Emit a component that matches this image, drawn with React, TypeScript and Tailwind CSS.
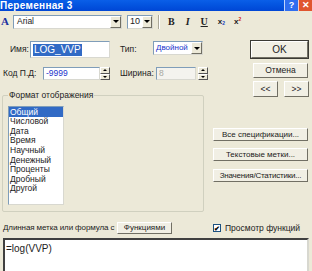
import React from 'react';

const font = "font-['Liberation_Sans',Arial,sans-serif]";

const Raised: React.FC<{ className?: string; children?: React.ReactNode; def?: boolean }> = ({ className = '', children, def }) => (
  <div className={`flex items-center justify-center whitespace-nowrap bg-[#f1efe4] border border-t-white border-l-white border-b-[#716f64] border-r-[#716f64] ${def ? 'outline outline-1 outline-[#3b3a35]' : ''} text-[8.5px] text-[#222] ${className}`}>
    {children}
  </div>
);

const Sunken: React.FC<{ className?: string; children?: React.ReactNode }> = ({ className = '', children }) => (
  <div className={`flex items-center bg-white border border-t-[#7f9db9] border-l-[#7f9db9] border-b-[#d8d8d0] border-r-[#d8d8d0] ${className}`}>
    {children}
  </div>
);

const ArrowBtn: React.FC<{ className?: string }> = ({ className = '' }) => (
  <div className={`flex items-center justify-center bg-[#ece9d8] border border-t-white border-l-white border-b-[#716f64] border-r-[#716f64] ${className}`}>
    <div className="w-0 h-0 border-l-[3px] border-r-[3px] border-t-[3px] border-l-transparent border-r-transparent border-t-black" />
  </div>
);

const Spin: React.FC = () => (
  <div className="flex flex-col w-[10px] h-[13px]">
    <div className="flex-1 flex items-center justify-center bg-[#ece9d8] border border-t-white border-l-white border-b-[#555] border-r-[#555]">
      <div className="w-0 h-0 border-l-[2px] border-r-[2px] border-b-[2px] border-l-transparent border-r-transparent border-b-black" />
    </div>
    <div className="flex-1 flex items-center justify-center bg-[#ece9d8] border border-t-white border-l-white border-b-[#555] border-r-[#555]">
      <div className="w-0 h-0 border-l-[2px] border-r-[2px] border-t-[2px] border-l-transparent border-r-transparent border-t-black" />
    </div>
  </div>
);

const formats = ['Общий', 'Числовой', 'Дата', 'Время', 'Научный', 'Денежный', 'Проценты', 'Дробный', 'Другой'];

export default function App() {
  return (
    <div className={`w-[312px] h-[271px] overflow-hidden bg-[#ece9d8] text-[8.5px] text-[#222] leading-none whitespace-nowrap ${font}`}>
      {/* title bar */}
      <div className="h-[11px] flex items-center bg-gradient-to-b from-[#0a5fe8] to-[#0046d5] text-white">
        <span className="ml-0 font-bold text-[10px] tracking-[0.3px]">Переменная 3</span>
        <div className="ml-auto flex h-full">
          <div className="w-[14px] h-full flex items-center justify-center bg-[#2f6ef0] border-l border-white/70 text-[9px] font-bold">?</div>
          <div className="w-[14px] h-full flex items-center justify-center bg-[#e0552f] border-l border-white/70 text-[9px] font-bold">✕</div>
        </div>
      </div>

      {/* toolbar */}
      <div className="h-[19px] flex items-center pt-[2px]">
        <span className="ml-[1px] w-[9px] text-[11px] font-bold text-[#1a2fa0] font-['Liberation_Serif',serif]">A</span>
        <Sunken className="ml-[3px] w-[109px] h-[14px]">
          <span className="ml-[3px]">Arial</span>
          <ArrowBtn className="ml-auto w-[11px] h-[12px]" />
        </Sunken>
        <Sunken className="ml-[5px] w-[26px] h-[14px]">
          <span className="ml-[2px] text-[9px]">10</span>
          <ArrowBtn className="ml-auto w-[10px] h-[12px]" />
        </Sunken>
        <div className="ml-[5px] w-[2px] h-[14px] border-l border-l-[#aca899] border-r border-r-white" />
        <div className="flex items-center font-['Liberation_Serif',serif] font-bold text-[10px]">
          <span className="ml-[8px]">B</span>
          <span className="ml-[11px] italic">I</span>
          <span className="ml-[11px] underline">U</span>
          <span className="ml-[10px] text-[8px] font-['Liberation_Sans',sans-serif]">x<sub className="text-[5px] text-[#2040c0]">2</sub></span>
          <span className="ml-[9px] text-[8px] font-['Liberation_Sans',sans-serif]">x<sup className="text-[5px] text-[#d02020]">2</sup></span>
        </div>
      </div>

      {/* body */}
      <div className="flex mt-[11px]">
        <div className="w-[208px] flex flex-col">
          <div className="h-[17px] flex items-center">
            <span className="ml-[10px] w-[20px]">Имя:</span>
            <Sunken className="w-[80px] h-[17px]">
              <span className="ml-[2px] bg-[#316ac5] text-white text-[10px] px-[1px] py-[1px]">LOG_VVP</span>
            </Sunken>
            <span className="ml-[10px] w-[33px]">Тип:</span>
            <Sunken className="w-[50px] h-[14px] self-start">
              <span className="ml-[2px] text-[#2233cc] text-[8px]">Двойной</span>
              <ArrowBtn className="ml-auto w-[11px] h-[12px]" />
            </Sunken>
          </div>
          <div className="mt-[9px] h-[13px] flex items-center">
            <span className="ml-[3px] w-[40px]">Код П.Д:</span>
            <Sunken className="w-[57px] h-[13px]">
              <span className="ml-[2px] text-[#2233cc]">-9999</span>
            </Sunken>
            <Spin />
            <span className="ml-[10px] w-[36px]">Ширина:</span>
            <Sunken className="w-[40px] h-[13px] !bg-[#f4f3ee]">
              <span className="ml-[2px] text-[#a8a8a0]">8</span>
            </Sunken>
            <div className="ml-[2px]"><Spin /></div>
          </div>
          {/* group box */}
          <div className="relative ml-[2px] mt-[15px] w-[202px] h-[117px] border border-[#d0d0bf] rounded-[2px]">
            <span className="absolute left-[5px] top-[-5px] bg-[#ece9d8] px-[1px]">Формат отображения</span>
            <div className="ml-[5px] mt-[10px] w-[56px] h-[99px] bg-white border border-t-[#7f9db9] border-l-[#7f9db9] border-b-[#d8d8d0] border-r-[#d8d8d0] flex flex-col">
              {formats.map((f, i) => (
                <div key={f} className={`h-[9.6px] flex items-center pl-[1px] ${i === 0 ? 'bg-[#316ac5] text-white' : ''}`}>{f}</div>
              ))}
            </div>
          </div>
        </div>
        <div className="flex flex-col">
          <Raised def className="ml-[43px] w-[57px] h-[17px] text-[10px]">OK</Raised>
          <Raised className="ml-[45px] mt-[5px] w-[55px] h-[15px]">Отмена</Raised>
          <div className="ml-[45px] mt-[3px] flex">
            <Raised className="w-[25px] h-[16px]">&lt;&lt;</Raised>
            <Raised className="ml-[6px] w-[25px] h-[16px]">&gt;&gt;</Raised>
          </div>
          <Raised className="ml-[5px] mt-[31px] w-[95px] h-[13px] text-[8px]">Все спецификации...</Raised>
          <Raised className="ml-[5px] mt-[7px] w-[95px] h-[13px] text-[8px]">Текстовые метки...</Raised>
          <Raised className="ml-[5px] mt-[8px] w-[95px] h-[13px] text-[8px] tracking-[-0.2px]">Значения/Статистики...</Raised>
        </div>
      </div>

      {/* formula row */}
      <div className="mt-[10px] h-[12px] flex items-center">
        <span className="ml-[3px] w-[114px] text-[8px] tracking-[-0.1px]">Длинная метка или формула с</span>
        <Raised className="w-[55px] h-[12px] text-[8px]">Функциями</Raised>
        <div className="ml-[41px] w-[8px] h-[8px] bg-white border border-[#1c5180] flex items-center justify-center text-[7px] font-bold text-black">✔</div>
        <span className="ml-[4px]">Просмотр функций</span>
      </div>
      <div className="mt-[4px] ml-[3px] w-[306px] h-[40px] bg-white border-2 border-t-[#404040] border-l-[#404040] border-b-[#d8d8d0] border-r-[#d8d8d0]">
        <div className="ml-[1px] mt-[4px] text-[10px]">=log(VVP)</div>
      </div>
    </div>
  );
}
